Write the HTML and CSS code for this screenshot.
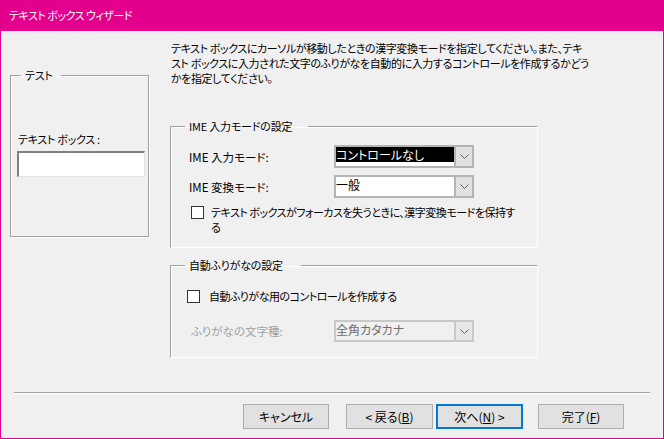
FILE: index.html
```html
<!DOCTYPE html>
<html lang="ja">
<head>
    <meta charset="UTF-8">
    <title>テキスト ボックス ウィザード</title>
    <link rel="stylesheet" href="styles.css">
</head>
<body>
    <div class="window">
        <div class="titlebar">テキスト ボックス ウィザード</div>

        <div class="panes">
            <div class="side">
                <fieldset class="sample">
                    <legend>テスト</legend>
                    <div class="sample-body">
                        <div class="sample-label">テキスト ボックス :</div>
                        <div class="sunken"></div>
                    </div>
                </fieldset>
            </div>

            <div class="main">
                <p class="intro">
                    <span>テキスト ボックスにカーソルが移動したときの漢字変換モードを指定してください。また、テキ</span>
                    <span>スト ボックスに入力された文字のふりがなを自動的に入力するコントロールを作成するかどう</span>
                    <span>かを指定してください。</span>
                </p>

                <fieldset class="group ime">
                    <legend>IME 入力モードの設定</legend>
                    <div class="group-body">
                        <div class="row first">
                            <span class="row-label">IME 入力モード:</span>
                            <div class="combo">
                                <div class="combo-value"><span class="selected">コントロールなし</span></div>
                                <div class="combo-arrow"><svg width="9" height="5" viewBox="0 0 9 5"><path d="M0.5 0.5 L4.5 4.5 L8.5 0.5" fill="none" stroke="#606060" stroke-width="1"/></svg></div>
                            </div>
                        </div>
                        <div class="row">
                            <span class="row-label">IME 変換モード:</span>
                            <div class="combo">
                                <div class="combo-value">一般</div>
                                <div class="combo-arrow"><svg width="9" height="5" viewBox="0 0 9 5"><path d="M0.5 0.5 L4.5 4.5 L8.5 0.5" fill="none" stroke="#606060" stroke-width="1"/></svg></div>
                            </div>
                        </div>
                        <div class="check keep">
                            <span class="box"></span>
                            <span class="check-text">テキスト ボックスがフォーカスを失うときに、漢字変換モードを保持す<br>る</span>
                        </div>
                    </div>
                </fieldset>

                <fieldset class="group furigana">
                    <legend>自動ふりがなの設定</legend>
                    <div class="group-body">
                        <div class="check auto">
                            <span class="box"></span>
                            <span class="check-text">自動ふりがな用のコントロールを作成する</span>
                        </div>
                        <div class="row disabled">
                            <span class="row-label">ふりがなの文字種:</span>
                            <div class="combo">
                                <div class="combo-value">全角カタカナ</div>
                                <div class="combo-arrow"><svg width="9" height="5" viewBox="0 0 9 5"><path d="M0.5 0.5 L4.5 4.5 L8.5 0.5" fill="none" stroke="#606060" stroke-width="1"/></svg></div>
                            </div>
                        </div>
                    </div>
                </fieldset>
            </div>
        </div>

        <div class="separator"></div>

        <div class="buttons">
            <button class="btn cancel">キャンセル</button>
            <button class="btn back">&lt; 戻る(<u>B</u>)</button>
            <button class="btn next default">次へ(<u>N</u>) &gt;</button>
            <button class="btn finish">完了(<u>F</u>)</button>
        </div>
    </div>
</body>
</html>
```

FILE: styles.css
```css
body {
    margin: 0;
    background-color: #f0f0f0;
    font-family: "Noto Sans CJK JP", "Noto Sans", sans-serif;
    font-size: 11px;
    font-feature-settings: "palt";
    color: #000;
}

.window {
    width: 664px;
    height: 439px;
    box-sizing: border-box;
    border: 1px solid #e3008c;
    border-top: none;
    background-color: #f0f0f0;
}

.titlebar {
    height: 31px;
    line-height: 30px;
    padding-left: 9px;
    margin: 0 -1px;
    background-color: #e3008c;
    color: #fff;
    font-size: 11px;
    letter-spacing: -0.5px;
}

.panes {
    display: flex;
    height: 361px;
}

/* left preview */
.side {
    margin-left: 9px;
    margin-top: 37px;
}

fieldset {
    margin: 0;
    padding: 0;
    min-width: 0;
}

legend {
    line-height: 14px;
    font-size: 11px;
    letter-spacing: -0.2px;
}

.sample {
    width: 139px;
    height: 169px;
    box-sizing: border-box;
    border: 1px solid #a0a0a0;
    box-shadow: 1px 1px 0 #fff, inset 1px 1px 0 #fff;
}

.sample legend {
    margin-left: 10px;
    padding: 0 8px 0 4px;
}

.sample-body {
    padding-left: 6px;
}

.sample-label {
    margin-top: 50px;
    line-height: 15px;
    padding-left: 1px;
    letter-spacing: -0.3px;
}

.sunken {
    margin-top: 4px;
    width: 128px;
    height: 26px;
    box-sizing: border-box;
    background-color: #fff;
    border-top: 2px solid #808080;
    border-left: 2px solid #808080;
    border-right: 1px solid #e3e3e3;
    border-bottom: 1px solid #e3e3e3;
}

/* right side */
.main {
    margin-left: 21px;
    margin-top: 10px;
    width: 368px;
}

.intro {
    margin: 0 0 0 1px;
    line-height: 15px;
    white-space: nowrap;
    letter-spacing: -0.4px;
}

.intro span {
    display: block;
}

.group {
    width: 368px;
    box-sizing: border-box;
    border-top: 1px solid #a0a0a0;
    border-left: 1px solid #a0a0a0;
    border-right: 1px solid #fff;
    border-bottom: 1px solid #fff;
    box-shadow: inset 1px 1px 0 #fff;
}

.group legend {
    margin-left: 14px;
    padding: 0 16px 0 4px;
}

.furigana legend {
    padding-right: 18px;
}

.group-body {
    padding-left: 18px;
}

.ime {
    margin-top: 33px;
    height: 129px;
}

.furigana {
    margin-top: 10px;
    height: 100px;
}

.furigana .group-body {
    padding-left: 16px;
}

.row {
    display: flex;
    align-items: center;
    height: 23px;
    margin-top: 7px;
}

.row.first {
    margin-top: 12px;
}

.row-label {
    width: 145px;
    font-size: 11.5px;
}

.combo {
    display: flex;
    width: 140px;
    height: 23px;
    box-sizing: border-box;
    border: 2px solid #b4b4b4;
    background-color: #fff;
}

.combo-value {
    flex: 1;
    line-height: 15px;
    font-size: 12px;
    overflow: hidden;
}

.selected {
    display: block;
    height: 15px;
    background-color: #000;
    color: #fff;
}

.combo-arrow {
    width: 16px;
    background-color: #e1e1e1;
    border-left: 2px solid #b4b4b4;
    display: flex;
    align-items: center;
    justify-content: center;
}

.check {
    display: flex;
    align-items: flex-start;
    line-height: 15px;
}

.check .box {
    width: 13px;
    height: 13px;
    box-sizing: border-box;
    border: 1px solid #333;
    background-color: #fff;
    margin-top: 1px;
    flex-shrink: 0;
}

.check-text {
    white-space: nowrap;
    letter-spacing: -0.5px;
}

.keep {
    margin-top: 7px;
    margin-left: 2px;
}

.keep .check-text {
    margin-left: 7px;
}

.auto {
    margin-top: 17px;
}

.auto .check-text {
    margin-left: 9px;
}

.disabled {
    margin-top: 16px;
    margin-left: 4px;
    height: 22px;
    color: #a0a0a0;
}

.disabled .row-label {
    width: 143px;
}

.disabled .combo {
    height: 22px;
    background-color: #f0f0f0;
    border-color: #c8c8c8;
    color: #6d6d6d;
}

.disabled .combo-arrow {
    border-left-color: #c8c8c8;
    background-color: #e6e6e6;
}

/* footer */
.separator {
    margin-left: 13px;
    width: 636px;
    height: 1px;
    background-color: #a0a0a0;
    border-bottom: 1px solid #fff;
}

.buttons {
    display: flex;
    margin-top: 10px;
    margin-left: 242px;
}

.btn {
    height: 25px;
    width: 86px;
    box-sizing: border-box;
    margin: 0;
    padding: 0;
    background-color: #e1e1e1;
    border: 1px solid #adadad;
    font-family: inherit;
    font-size: 12px;
    font-feature-settings: "palt";
    color: #000;
}

.back {
    width: 87px;
    margin-left: 17px;
}

.next {
    width: 87px;
    margin-left: 3px;
}

.default {
    border: 2px solid #0078d7;
}

.finish {
    margin-left: 15px;
}
```
